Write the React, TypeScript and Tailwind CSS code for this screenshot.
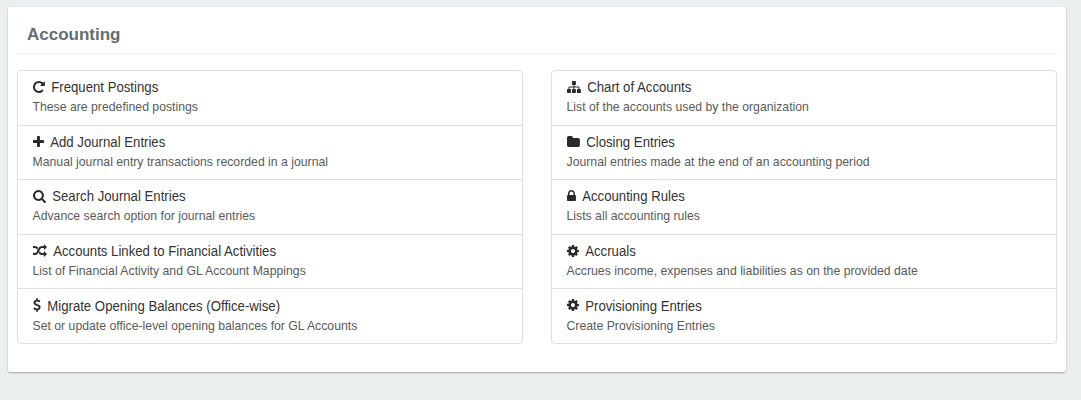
type IconDef = { x: number; w: number; d: string };

const icons: Record<string, IconDef> = {
  repeat: { x: 128, w: 1536, d: "M1664 256v448q0 26-19 45t-45 19h-448q-42 0-59-40-17-39 14-69l138-138q-148-137-349-137-104 0-198.5 40.5t-163.5 109.5-109.5 163.5-40.5 198.5 40.5 198.5 109.5 163.5 163.5 109.5 198.5 40.5q119 0 225-52t179-147q7-10 23-12 15 0 25 9l137 138q9 8 9.5 20.5t-7.5 22.5q-109 132-264 204.5t-327 72.5q-156 0-298-61t-245-164-164-245-61-298 61-298 164-245 245-164 298-61q147 0 284.5 55.5t244.5 156.5l130-129q29-31 70-14 39 17 39 59z" },
  plus: { x: 192, w: 1408, d: "M1600 736v192q0 40-28 68t-68 28h-416v416q0 40-28 68t-68 28h-192q-40 0-68-28t-28-68v-416h-416q-40 0-68-28t-28-68v-192q0-40 28-68t68-28h416v-416q0-40 28-68t68-28h192q40 0 68 28t28 68v416h416q40 0 68 28t28 68z" },
  search: { x: 64, w: 1664, d: "M1216 832q0-185-131.5-316.5t-316.5-131.5-316.5 131.5-131.5 316.5 131.5 316.5 316.5 131.5 316.5-131.5 131.5-316.5zm512 832q0 52-38 90t-90 38q-54 0-90-38l-343-342q-179 124-399 124-143 0-273.5-55.5t-225-150-150-225-55.5-273.5 55.5-273.5 150-225 225-150 273.5-55.5 273.5 55.5 225 150 150 225 55.5 273.5q0 220-124 399l343 343q37 37 37 90z" },
  random: { x: 0, w: 1792, d: "M666 481q-60 92-137 273-22-45-37-72.5t-40.5-63.5-51-56.5-63-35-81.5-14.5h-224q-14 0-23-9t-9-23v-192q0-14 9-23t23-9h224q250 0 410 225zm1126 799q0 14-9 23l-320 320q-9 9-23 9-13 0-22.5-9.5t-9.5-22.5v-192q-32 0-85 .5t-81 1-73-1-71-5-64-10.5-63-18.5-58-28.5-59-40-55-53.5-56-69.5q59-93 136-273 22 45 37 72.5t40.5 63.5 51 56.5 63 35 81.5 14.5h256v-192q0-14 9-23t23-9q12 0 24 10l319 319q9 9 9 23zm0-896q0 14-9 23l-320 320q-9 9-23 9-13 0-22.5-9.5t-9.5-22.5v-192h-256q-48 0-87 15t-69 45-51 61.5-45 77.5q-32 62-78 171-29 66-49.5 111t-54 105-64 100-74 83-90 68.5-106.5 42-128 16.5h-224q-14 0-23-9t-9-23v-192q0-14 9-23t23-9h224q48 0 87-15t69-45 51-61.5 45-77.5q32-62 78-171 29-66 49.5-111t54-105 64-100 74-83 90-68.5 106.5-42 128-16.5h256v-192q0-14 9-23t23-9q12 0 24 10l319 319q9 9 9 23z" },
  dollar: { x: 384, w: 1024, d: "M1362 1185q0 153-99.5 263.5t-258.5 136.5v175q0 14-9 23t-23 9h-135q-13 0-22.5-9.5t-9.5-22.5v-175q-66-9-127.5-31t-101.5-44.5-74-48-46.5-37.5-17.5-18q-17-21-2-41l103-135q7-10 23-12 15-2 24 9l2 2q113 99 243 125 37 8 74 8 81 0 142.5-43t61.5-122q0-28-15-53t-33.5-42-58.5-37.5-66-32-80-32.5q-39-16-61.5-25t-61.5-26.5-62.5-31-56.5-35.5-53.5-42.5-43.5-49-35.5-58-21-66.5-8.5-78q0-138 98-242t255-134v-180q0-13 9.5-22.5t22.5-9.5h135q14 0 23 9t9 23v176q57 6 110.5 23t87 33.5 63.5 37.5 39 29 15 14q17 18 5 38l-81 146q-8 15-23 16-14 3-27-7-3-3-14.5-12t-39-26.5-58.5-32-74.5-26-85.5-11.5q-95 0-155 43t-60 111q0 26 8.5 48t29.5 41.5 39.5 33 56 31 60.5 27 70 27.5q53 20 81 31.5t76 35 75.5 42.5 62 50 53 63.5 31.5 76.5 13 94z" },
  sitemap: { x: 0, w: 1792, d: "M1792 1248v320q0 40-28 68t-68 28h-320q-40 0-68-28t-28-68v-320q0-40 28-68t68-28h96v-192h-512v192h96q40 0 68 28t28 68v320q0 40-28 68t-68 28h-320q-40 0-68-28t-28-68v-320q0-40 28-68t68-28h96v-192h-512v192h96q40 0 68 28t28 68v320q0 40-28 68t-68 28h-320q-40 0-68-28t-28-68v-320q0-40 28-68t68-28h96v-192q0-52 38-90t90-38h512v-192h-96q-40 0-68-28t-28-68v-320q0-40 28-68t68-28h320q40 0 68 28t28 68v320q0 40-28 68t-68 28h-96v192h512q52 0 90 38t38 90v192h96q40 0 68 28t28 68z" },
  folder: { x: 64, w: 1664, d: "M1728 608v704q0 92-66 158t-158 66h-1216q-92 0-158-66t-66-158v-960q0-92 66-158t158-66h320q92 0 158 66t66 158v32h672q92 0 158 66t66 158z" },
  lock: { x: 320, w: 1152, d: "M640 768h512v-192q0-106-75-181t-181-75-181 75-75 181v192zm832 96v576q0 40-28 68t-68 28h-960q-40 0-68-28t-28-68v-576q0-40 28-68t68-28h32v-192q0-184 132-316t316-132 316 132 132 316v192h32q40 0 68 28t28 68z" },
  cog: { x: 128, w: 1536, d: "M1152 896q0-106-75-181t-181-75-181 75-75 181 75 181 181 75 181-75 75-181zm512-109v222q0 12-8 23t-20 13l-185 28q-19 54-39 91 35 50 107 138 10 12 10 25t-9 23q-27 37-99 108t-94 71q-12 0-26-9l-138-108q-44 23-91 38-16 136-29 186-7 28-36 28h-222q-14 0-24.5-8.5t-11.5-21.5l-28-184q-49-16-90-37l-141 107q-10 9-25 9-14 0-25-11-126-114-165-168-7-10-7-23 0-12 8-23 15-21 51-66.5t54-70.5q-27-50-41-99l-183-27q-13-2-21-12.5t-8-23.5v-222q0-12 8-23t19-13l186-28q14-46 39-92-40-57-107-138-10-12-10-24 0-10 9-23 26-36 98.5-107.5t94.5-71.5q13 0 26 10l138 107q44-23 91-38 16-136 29-186 7-28 36-28h222q14 0 24.5 8.5t11.5 21.5l28 184q49 16 90 37l142-107q9-9 24-9 13 0 25 10 129 119 165 170 7 8 7 22 0 12-8 23-15 21-51 66.5t-54 70.5q26 50 41 98l183 28q13 2 21 12.5t8 23.5z" },
};

function Icon({ name }: { name: string }) {
  const { x, w, d } = icons[name];
  return (
    <svg viewBox={`${x} 0 ${w} 1792`} className="mb-[2.5px] h-3.5 shrink-0 overflow-visible fill-[#2a2a2a]" style={{ width: w / 129 }}>
      <path d={d} />
    </svg>
  );
}

type Item = { icon: string; title: string; text: string };

const left: Item[] = [
  { icon: "repeat", title: "Frequent Postings", text: "These are predefined postings" },
  { icon: "plus", title: "Add Journal Entries", text: "Manual journal entry transactions recorded in a journal" },
  { icon: "search", title: "Search Journal Entries", text: "Advance search option for journal entries" },
  { icon: "random", title: "Accounts Linked to Financial Activities", text: "List of Financial Activity and GL Account Mappings" },
  { icon: "dollar", title: "Migrate Opening Balances (Office-wise)", text: "Set or update office-level opening balances for GL Accounts" },
];

const right: Item[] = [
  { icon: "sitemap", title: "Chart of Accounts", text: "List of the accounts used by the organization" },
  { icon: "folder", title: "Closing Entries", text: "Journal entries made at the end of an accounting period" },
  { icon: "lock", title: "Accounting Rules", text: "Lists all accounting rules" },
  { icon: "cog", title: "Accruals", text: "Accrues income, expenses and liabilities as on the provided date" },
  { icon: "cog", title: "Provisioning Entries", text: "Create Provisioning Entries" },
];

function List({ items }: { items: Item[] }) {
  return (
    <ul className="h-[274px] w-[506px] divide-y divide-[#dfdfdf] rounded-[4px] border border-[#dfdfdf]">
      {items.map((item) => (
        <li key={item.title} className="h-[54.6px] pt-[7.3px] pl-[14.5px]">
          <div className="flex h-5 items-center gap-[6.8px]">
            <Icon name={item.icon} />
            <h4 className="origin-[0_75%] scale-y-[1.08] text-[13.2px] leading-5 whitespace-nowrap text-[#333333]">{item.title}</h4>
          </div>
          <p className="origin-[0_75%] scale-y-[1.06] text-[12.25px] leading-[19px] whitespace-nowrap text-[#5a5a5a]">{item.text}</p>
        </li>
      ))}
    </ul>
  );
}

export default function App() {
  return (
    <div className="h-[400px] overflow-hidden bg-[#ebeff0] pt-[7px] pl-[8px] font-['Liberation_Sans',Arial,sans-serif]">
      <main className="h-[365px] w-[1058px] rounded-[2px] bg-white px-[9px] shadow-[0_1px_2px_rgba(0,0,0,0.32)]">
        <h1 className="h-[47px] border-b border-[#eeeeee] pt-[16px] pl-[10px] text-[17px] leading-6 font-bold text-[#636e72]">Accounting</h1>
        <div className="mt-4 flex gap-7">
          <List items={left} />
          <List items={right} />
        </div>
      </main>
    </div>
  );
}
